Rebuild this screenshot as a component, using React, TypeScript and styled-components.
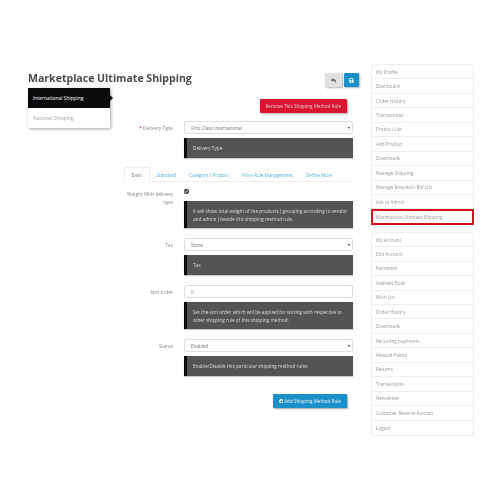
import React from "react";
import styled, { createGlobalStyle } from "styled-components";
import { FaReply, FaSave, FaPlusCircle } from "react-icons/fa";

const Global = createGlobalStyle`
  html, body { margin: 0; padding: 0; background: #fff; }
  body { font-family: "Open Sans", "DejaVu Sans", sans-serif; color: #666; }
  * { box-sizing: border-box; }
`;
const Page = styled.div`
  width: 500px; height: 500px; overflow: hidden; padding: 64px 26px 0 28px;
  display: flex; align-items: flex-start; filter: blur(0.3px);
`;
const Main = styled.main`width: 331px; display: flex; flex-direction: column;`;
const Header = styled.header`display: flex; align-items: flex-start; justify-content: space-between; height: 24px;`;
const Title = styled.h1`margin: 7px 0 0; font-size: 10.55px; line-height: 15px; font-weight: 700; color: #4a4a4a;`;
const HeaderButtons = styled.div`display: flex; gap: 2px; margin-top: 9px;`;
const IconButton = styled.button<{ $primary?: boolean }>`
  width: ${p => (p.$primary ? 15 : 17)}px; height: 14px; padding: 0; border: 0; border-radius: 1px;
  display: flex; align-items: center; justify-content: center; font-size: 5px;
  background: ${p => (p.$primary ? "#1b8fc7" : "#e2e2e2")}; color: ${p => (p.$primary ? "#fff" : "#666")};
  box-shadow: 1px 1px 2px rgba(0,0,0,.3);
`;
const Body = styled.div`display: flex; align-items: flex-start;`;
const VTabs = styled.nav`width: 82px; flex: none; display: flex; flex-direction: column; box-shadow: 1px 1px 3px rgba(0,0,0,.35);`;
const VTab = styled.div<{ $active?: boolean }>`
  position: relative; height: 20px; padding-left: 5px; display: flex; align-items: center; font-size: 4.9px;
  background: ${p => (p.$active ? "#0b0b0b" : "#fff")}; color: ${p => (p.$active ? "#fff" : "#a5a5a5")};
  ${p => p.$active && `&::after { content: ""; position: absolute; right: -3px; top: 7px; border-left: 3px solid #0b0b0b; border-top: 3px solid transparent; border-bottom: 3px solid transparent; }`}
`;
const Content = styled.div`flex: 1; min-width: 0; display: flex; flex-direction: column; padding: 11px 6px 0 0;`;
const ActionRow = styled.div<{ $top?: number }>`display: flex; justify-content: flex-end; padding-right: 6px; margin-top: ${p => p.$top ?? 0}px;`;
const ActionButton = styled.button<{ $kind: "danger" | "primary" }>`
  height: 14px; padding: 0 6px; border: 0; border-radius: 1px; font: 400 4.6px "Open Sans", sans-serif; color: ${p => (p.$kind === "danger" ? "#f6c3ca" : "#e8f4fa")};
  display: flex; align-items: center; gap: 1px; white-space: nowrap;
  background: ${p => (p.$kind === "danger" ? "#d8172f" : "#1b8fc7")};
  box-shadow: 1px 1px 2px rgba(0,0,0,.35);
`;
const FormRow = styled.div<{ $label: number; $top?: number }>`
  display: grid; grid-template-columns: ${p => p.$label}px 1fr; column-gap: 11px; margin-top: ${p => p.$top ?? 0}px;
`;
const Label = styled.label<{ $pad?: number }>`text-align: right; font-size: 4.8px; line-height: 8px; color: #888; padding-top: ${p => p.$pad ?? 2.5}px;`;
const Req = styled.span`color: #d8172f;`;
const FieldCol = styled.div`display: flex; flex-direction: column; gap: 4px;`;
const Control = styled.div<{ $select?: boolean }>`
  position: relative; height: 13px; border: 1px solid #ddd; border-radius: 2px; background: #fff;
  padding-left: 6px; display: flex; align-items: center; font-size: 4.65px; color: #777;
  ${p => p.$select && `&::after { content: ""; position: absolute; right: 2px; top: 5px; border-top: 2px solid #333; border-left: 1px solid transparent; border-right: 1px solid transparent; }`}
`;
const Help = styled.div<{ $tall?: boolean }>`
  min-height: ${p => (p.$tall ? 27 : 20)}px; background: #545454; border-left: 3px solid #0b0b0b; color: #ddd;
  padding: 0 5px 0 6px; display: flex; align-items: center; font-size: 4.7px; line-height: 8px;
  box-shadow: 0 1px 1px rgba(0,0,0,.2);
`;
const Tabs = styled.div`margin: 9px 0 0 14px; height: 15px; display: flex; border-bottom: 1px solid #eee;`;
const Tab = styled.div<{ $active?: boolean }>`
  height: 15px; display: flex; align-items: center; padding: 0 6.5px; font-size: 4.6px;
  color: ${p => (p.$active ? "#888" : "#5aaed6")};
  ${p => p.$active && "border: 1px solid #eee; border-bottom-color: #fff; border-radius: 2px 2px 0 0;"}
`;
const Panel = styled.div`padding-left: 14px; display: flex; flex-direction: column; padding-top: 3px;`;
const CheckWrap = styled.div`height: 12px; display: flex; align-items: center;`;
const Check = styled.input`width: 5px; height: 5px; margin: 0; accent-color: #444;`;
const Sidebar = styled.aside`width: 103px; margin-left: 12px; display: flex; flex-direction: column; gap: 7px;`;
const Menu = styled.ul`margin: 0; padding: 0; list-style: none; border: 1px solid #eee; border-radius: 2px;`;
const MenuItem = styled.li<{ $highlight?: boolean }>`
  height: 14.45px; padding-left: 4px; display: flex; align-items: center; font-size: 4.65px; color: #999;
  border-bottom: 1px solid #eee;
  &:last-child { border-bottom: 0; }
  ${p => p.$highlight && "position: relative; &::after { content: ''; position: absolute; inset: 0 -1px -1px -1px; border: 2px solid #d3141f; }"}
`;

const accountA = ["My Profile","Dashboard","Order History","Transactions","Product List","Add Product","Downloads","Manage Shipping","Manage Request's Bid List","Ask to Admin","Marketplace Ultimate Shipping"];
const accountB = ["My Account","Edit Account","Password","Address Book","Wish List","Order History","Downloads","Recurring payments","Reward Points","Returns","Transactions","Newsletter","Customer Reverse Auction","Logout"];

export default function App() {
  return (
    <Page>
      <Global />
      <Main>
        <Header>
          <Title>Marketplace Ultimate Shipping</Title>
          <HeaderButtons>
            <IconButton><FaReply /></IconButton>
            <IconButton $primary><FaSave /></IconButton>
          </HeaderButtons>
        </Header>
        <Body>
          <VTabs>
            <VTab $active>International Shipping</VTab>
            <VTab>National Shipping</VTab>
          </VTabs>
          <Content>
            <ActionRow><ActionButton $kind="danger">Remove This Shipping Method Rule</ActionButton></ActionRow>
            <FormRow $label={63} $top={8}>
              <Label><Req>*</Req> Delivery Type</Label>
              <FieldCol>
                <Control $select>First Class International</Control>
                <Help>Delivery Type</Help>
              </FieldCol>
            </FormRow>
            <Tabs>
              <Tab $active>Basic</Tab>
              <Tab>Standard</Tab>
              <Tab>Category / Product</Tab>
              <Tab>Price Rule Management</Tab>
              <Tab>Define More</Tab>
            </Tabs>
            <Panel>
              <FormRow $label={49}>
                <Label $pad={5}>Weight With delivery type</Label>
                <FieldCol>
                  <CheckWrap><Check type="checkbox" defaultChecked /></CheckWrap>
                  <Help $tall>It will show total weight of the products ( grouping according to vendor and admin ) beside this shipping method rule.</Help>
                </FieldCol>
              </FormRow>
              <FormRow $label={49} $top={10}>
                <Label>Tax</Label>
                <FieldCol>
                  <Control $select>None</Control>
                  <Help>Tax</Help>
                </FieldCol>
              </FormRow>
              <FormRow $label={49} $top={10}>
                <Label>Sort order</Label>
                <FieldCol>
                  <Control>0</Control>
                  <Help $tall>Set the sort order which will be applied for sorting with respective to other shipping rule of this shipping method.</Help>
                </FieldCol>
              </FormRow>
              <FormRow $label={49} $top={10}>
                <Label>Status</Label>
                <FieldCol>
                  <Control $select>Enabled</Control>
                  <Help>Enable/Disable this particular shipping method rules</Help>
                </FieldCol>
              </FormRow>
            </Panel>
            <ActionRow $top={18}><ActionButton $kind="primary"><FaPlusCircle /> Add Shipping Method Rule</ActionButton></ActionRow>
          </Content>
        </Body>
      </Main>
      <Sidebar>
        <Menu>
          {accountA.map(t => <MenuItem key={t} $highlight={t.startsWith("Marketplace")}>{t}</MenuItem>)}
        </Menu>
        <Menu>
          {accountB.map(t => <MenuItem key={t}>{t}</MenuItem>)}
        </Menu>
      </Sidebar>
    </Page>
  );
}
